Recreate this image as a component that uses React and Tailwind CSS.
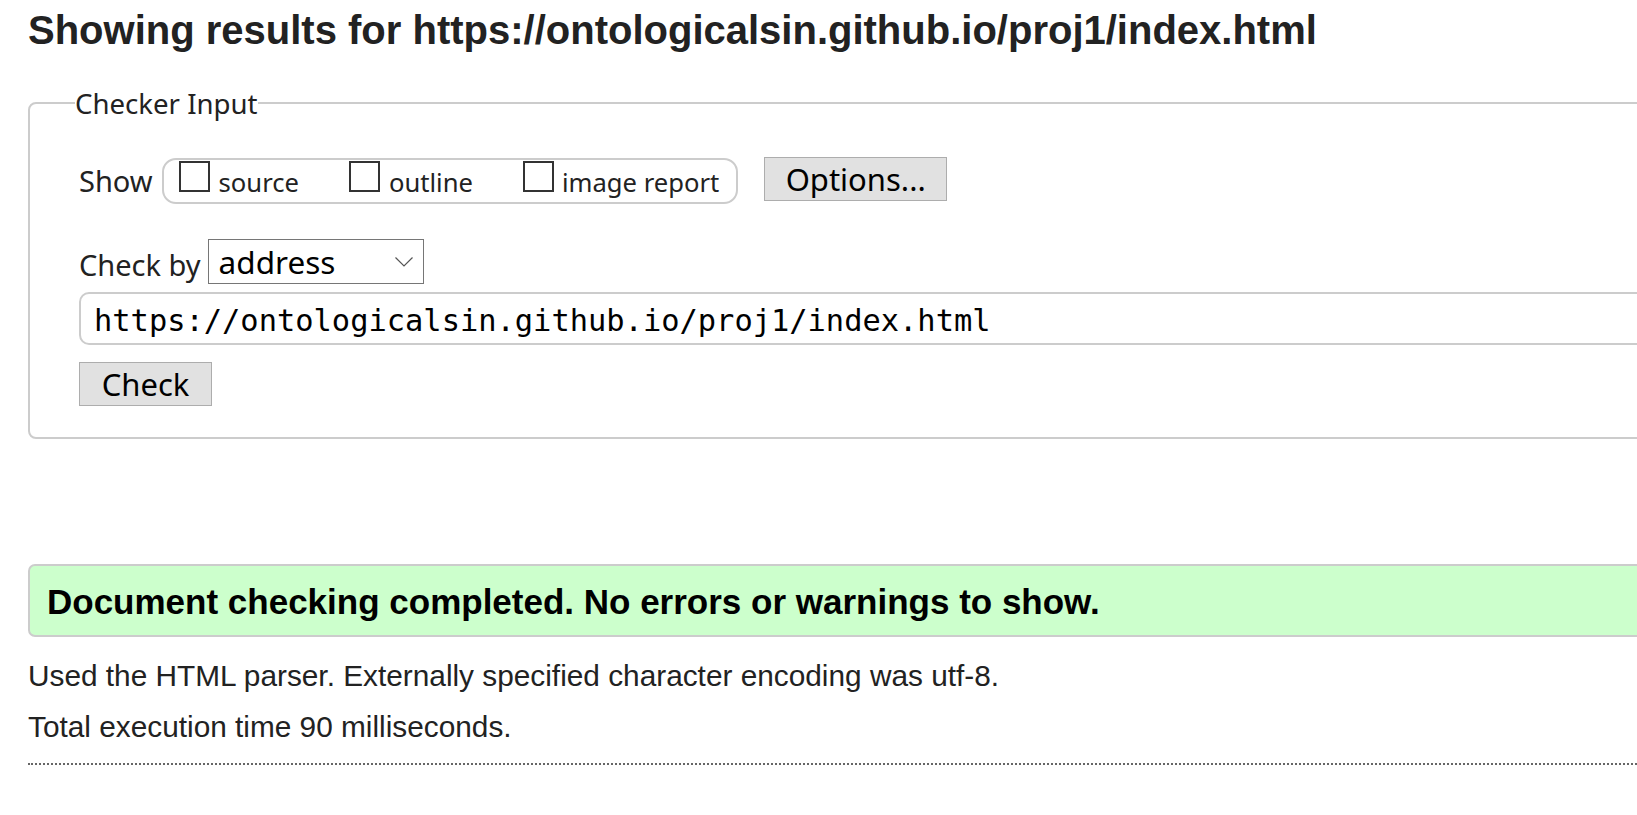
export default function App() {
  const noto = "font-['Noto_Sans',sans-serif]";
  return (
    <div className="w-full overflow-hidden bg-white text-[#222]">
      <div className="w-[1800px] pl-[28px]">
        <h2 className="mt-[6px] font-['Liberation_Sans',Arial,sans-serif] text-[40px] font-bold leading-[48px] text-[#222]">
          Showing results for https://ontologicalsin.github.io/proj1/index.html
        </h2>

        <fieldset className="mt-[31px] rounded-[8px] border-2 border-[#cccccc] pl-[45px] pr-[20px] pb-[31px] pt-[36px]">
          <legend className={`${noto} text-[27.6px] leading-[36px] text-[#222]`}>Checker Input</legend>

          <div className="ml-[4px]">
            <div className="flex items-start">
              <span className={`${noto} mt-[2px] text-[29px] leading-[44px]`}>Show</span>
              <div className="ml-[9px] mt-[1px] flex h-[46px] items-start rounded-[14px] border-2 border-[#cccccc] pl-[15px] pr-[17px] pt-[1px]">
                <label className="mr-[50px] flex items-baseline">
                  <span className="block h-[31px] w-[31px] border-2 border-[#333333] bg-white"></span>
                  <span className={`${noto} ml-[9px] text-[25.6px] leading-[31px]`}>source</span>
                </label>
                <label className="mr-[50px] flex items-baseline">
                  <span className="block h-[31px] w-[31px] border-2 border-[#333333] bg-white"></span>
                  <span className={`${noto} ml-[9px] text-[25.6px] leading-[31px]`}>outline</span>
                </label>
                <label className="flex items-baseline">
                  <span className="block h-[31px] w-[31px] border-2 border-[#333333] bg-white"></span>
                  <span className={`${noto} ml-[8px] text-[25.6px] leading-[31px]`}>image report</span>
                </label>
              </div>
              <button className={`${noto} ml-[26px] flex h-[44px] w-[183px] items-center justify-center border border-[#adadad] bg-[#e1e1e1] text-[31px] leading-none text-black`}>
                Options...
              </button>
            </div>

            <div className="mt-[35px] flex items-start">
              <span className={`${noto} mt-[3px] text-[29px] leading-[45px]`}>Check by</span>
              <div className="ml-[7px] flex h-[45px] w-[216px] items-center justify-between border border-[#767676] bg-white pl-[10px] pr-[10px]">
                <span className={`${noto} text-[31.5px] leading-none text-black`}>address</span>
                <svg width="18" height="10" viewBox="0 0 18 10" fill="none">
                  <path d="M0.5 0.5 L9 9 L17.5 0.5" stroke="#555555" strokeWidth="1.2" />
                </svg>
              </div>
            </div>

            <div className="mt-[5px] h-[53px] rounded-[10px] border-2 border-[#cccccc] pl-[13px] pt-[9px] font-['DejaVu_Sans_Mono',monospace] text-[30.4px] leading-[35px] text-black">
              https://ontologicalsin.github.io/proj1/index.html
            </div>

            <button className={`${noto} mt-[17px] flex h-[44px] w-[133px] items-center justify-center border border-[#adadad] bg-[#e1e1e1] text-[31px] leading-none text-black`}>
              Check
            </button>
          </div>
        </fieldset>

        <div className="mt-[125px] h-[73px] rounded-[7px] border-2 border-[#cccccc] bg-[#ccffcc] pl-[17px] font-['Liberation_Sans',Arial,sans-serif] text-[35px] font-bold leading-[71px] text-black">
          Document checking completed. No errors or warnings to show.
        </div>

        <div className="font-['Liberation_Sans',Arial,sans-serif] text-[29.8px] leading-[36px] text-[#222]">
          <p className="mt-[21px]">Used the HTML parser. Externally specified character encoding was utf-8.</p>
          <p className="mt-[15px]">Total execution time 90 milliseconds.</p>
        </div>

        <div className="mt-[18px] border-t-2 border-dotted border-[#666666]"></div>
      </div>
    </div>
  );
}
